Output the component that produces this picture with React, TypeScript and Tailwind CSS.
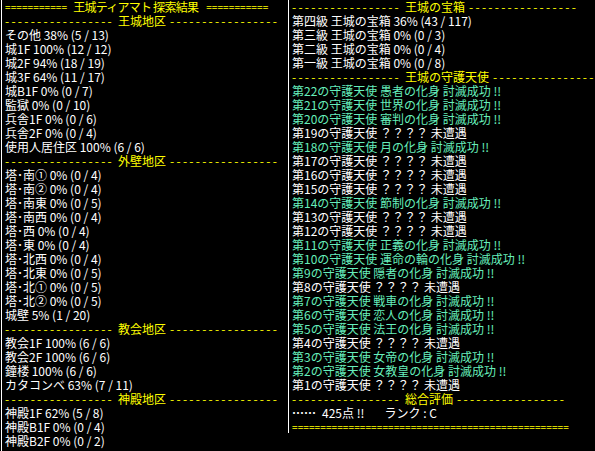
import React from "react";

type Line =
  | { kind: "title"; text: string }
  | { kind: "header"; text: string }
  | { kind: "item"; text: string; color?: "white" | "green" };

const WHITE = "text-[#ffffff]";
const GREEN = "text-[#66eebb]";
const YELLOW = "text-[#ffff00]";

const left: Line[] = [
  { kind: "header", text: "王城地区" },
  { kind: "item", text: "その他 38% (5 / 13)" },
  { kind: "item", text: "城1F 100% (12 / 12)" },
  { kind: "item", text: "城2F 94% (18 / 19)" },
  { kind: "item", text: "城3F 64% (11 / 17)" },
  { kind: "item", text: "城B1F 0% (0 / 7)" },
  { kind: "item", text: "監獄 0% (0 / 10)" },
  { kind: "item", text: "兵舎1F 0% (0 / 6)" },
  { kind: "item", text: "兵舎2F 0% (0 / 4)" },
  { kind: "item", text: "使用人居住区 100% (6 / 6)" },
  { kind: "header", text: "外壁地区" },
  { kind: "item", text: "塔･南① 0% (0 / 4)" },
  { kind: "item", text: "塔･南② 0% (0 / 4)" },
  { kind: "item", text: "塔･南東 0% (0 / 5)" },
  { kind: "item", text: "塔･南西 0% (0 / 4)" },
  { kind: "item", text: "塔･西 0% (0 / 4)" },
  { kind: "item", text: "塔･東 0% (0 / 4)" },
  { kind: "item", text: "塔･北西 0% (0 / 4)" },
  { kind: "item", text: "塔･北東 0% (0 / 5)" },
  { kind: "item", text: "塔･北① 0% (0 / 5)" },
  { kind: "item", text: "塔･北② 0% (0 / 5)" },
  { kind: "item", text: "城壁 5% (1 / 20)" },
  { kind: "header", text: "教会地区" },
  { kind: "item", text: "教会1F 100% (6 / 6)" },
  { kind: "item", text: "教会2F 100% (6 / 6)" },
  { kind: "item", text: "鐘楼 100% (6 / 6)" },
  { kind: "item", text: "カタコンベ 63% (7 / 11)" },
  { kind: "header", text: "神殿地区" },
  { kind: "item", text: "神殿1F 62% (5 / 8)" },
  { kind: "item", text: "神殿B1F 0% (0 / 4)" },
  { kind: "item", text: "神殿B2F 0% (0 / 2)" },
];

const defeated: Record<number, string> = {
  22: "愚者",
  21: "世界",
  20: "審判",
  18: "月",
  14: "節制",
  11: "正義",
  10: "運命の輪",
  9: "隠者",
  7: "戦車",
  6: "恋人",
  5: "法王",
  3: "女帝",
  2: "女教皇",
};

const angels: Line[] = Array.from({ length: 22 }, (_, i) => {
  const n = 22 - i;
  const d = defeated[n];
  return d
    ? { kind: "item" as const, text: `第${n}の守護天使 ${d}の化身 討滅成功 !!`, color: "green" as const }
    : { kind: "item" as const, text: `第${n}の守護天使 ？？？？ 未遭遇` };
});

const right: Line[] = [
  { kind: "header", text: "王城の宝箱" },
  { kind: "item", text: "第四級 王城の宝箱 36% (43 / 117)" },
  { kind: "item", text: "第三級 王城の宝箱 0% (0 / 3)" },
  { kind: "item", text: "第二級 王城の宝箱 0% (0 / 4)" },
  { kind: "item", text: "第一級 王城の宝箱 0% (0 / 8)" },
  { kind: "header", text: "王城の守護天使" },
  ...angels,
  { kind: "header", text: "総合評価" },
];

function Dashes() {
  return (
    <span className="shrink-0 tracking-[2.25px] whitespace-pre">-----------------</span>
  );
}

function Equals({ n }: { n: number }) {
  return (
    <span className="shrink-0 whitespace-pre text-[10px] tracking-[0.1px]">{"=".repeat(n)}</span>
  );
}

function Row({ line }: { line: Line }) {
  if (line.kind === "header") {
    return (
      <div className={`flex h-[14px] items-center whitespace-pre ${YELLOW}`}>
        <Dashes />
        <span className="ml-[4px] mr-[4px]">{line.text}</span>
        <Dashes />
      </div>
    );
  }
  if (line.kind === "title") {
    return (
      <div className={`flex h-[14px] items-center whitespace-pre ${YELLOW}`}>
        <Equals n={11} />
        <span className="ml-[6px] mr-[8px] tracking-[-0.75px]">{line.text}</span>
        <Equals n={11} />
      </div>
    );
  }
  return (
    <div className={`flex h-[14px] items-center whitespace-pre ${line.color === "green" ? GREEN : WHITE}`}>
      {line.text}
    </div>
  );
}

export default function App() {
  return (
    <div
      className="flex h-[451px] w-[595px] overflow-hidden bg-black text-[12px] leading-[14px]"
      style={{ fontFamily: '"Noto Sans CJK JP", "Noto Sans", sans-serif' }}
    >
      <div className="ml-[1px] flex w-[287px] shrink-0 flex-col overflow-hidden border-l border-white pl-[3px]">
        <Row line={{ kind: "title", text: "王城ティアマト 探索結果" }} />
        {left.map((l, i) => (
          <Row key={i} line={l} />
        ))}
      </div>
      <div className="flex h-[433px] min-w-0 flex-1 flex-col overflow-hidden border-l border-white pl-[3px]">
        {right.map((l, i) => (
          <Row key={i} line={l} />
        ))}
        <div className={`flex h-[14px] items-center whitespace-pre ${WHITE}`}>
          <span className="font-bold">……</span>
          <span className="ml-[6px]">425点 !!</span>
          <span className="ml-[20px]">ランク : C</span>
        </div>
        <div className={`flex h-[14px] items-center whitespace-pre ${YELLOW}`}>
          <Equals n={49} />
        </div>
      </div>
    </div>
  );
}
